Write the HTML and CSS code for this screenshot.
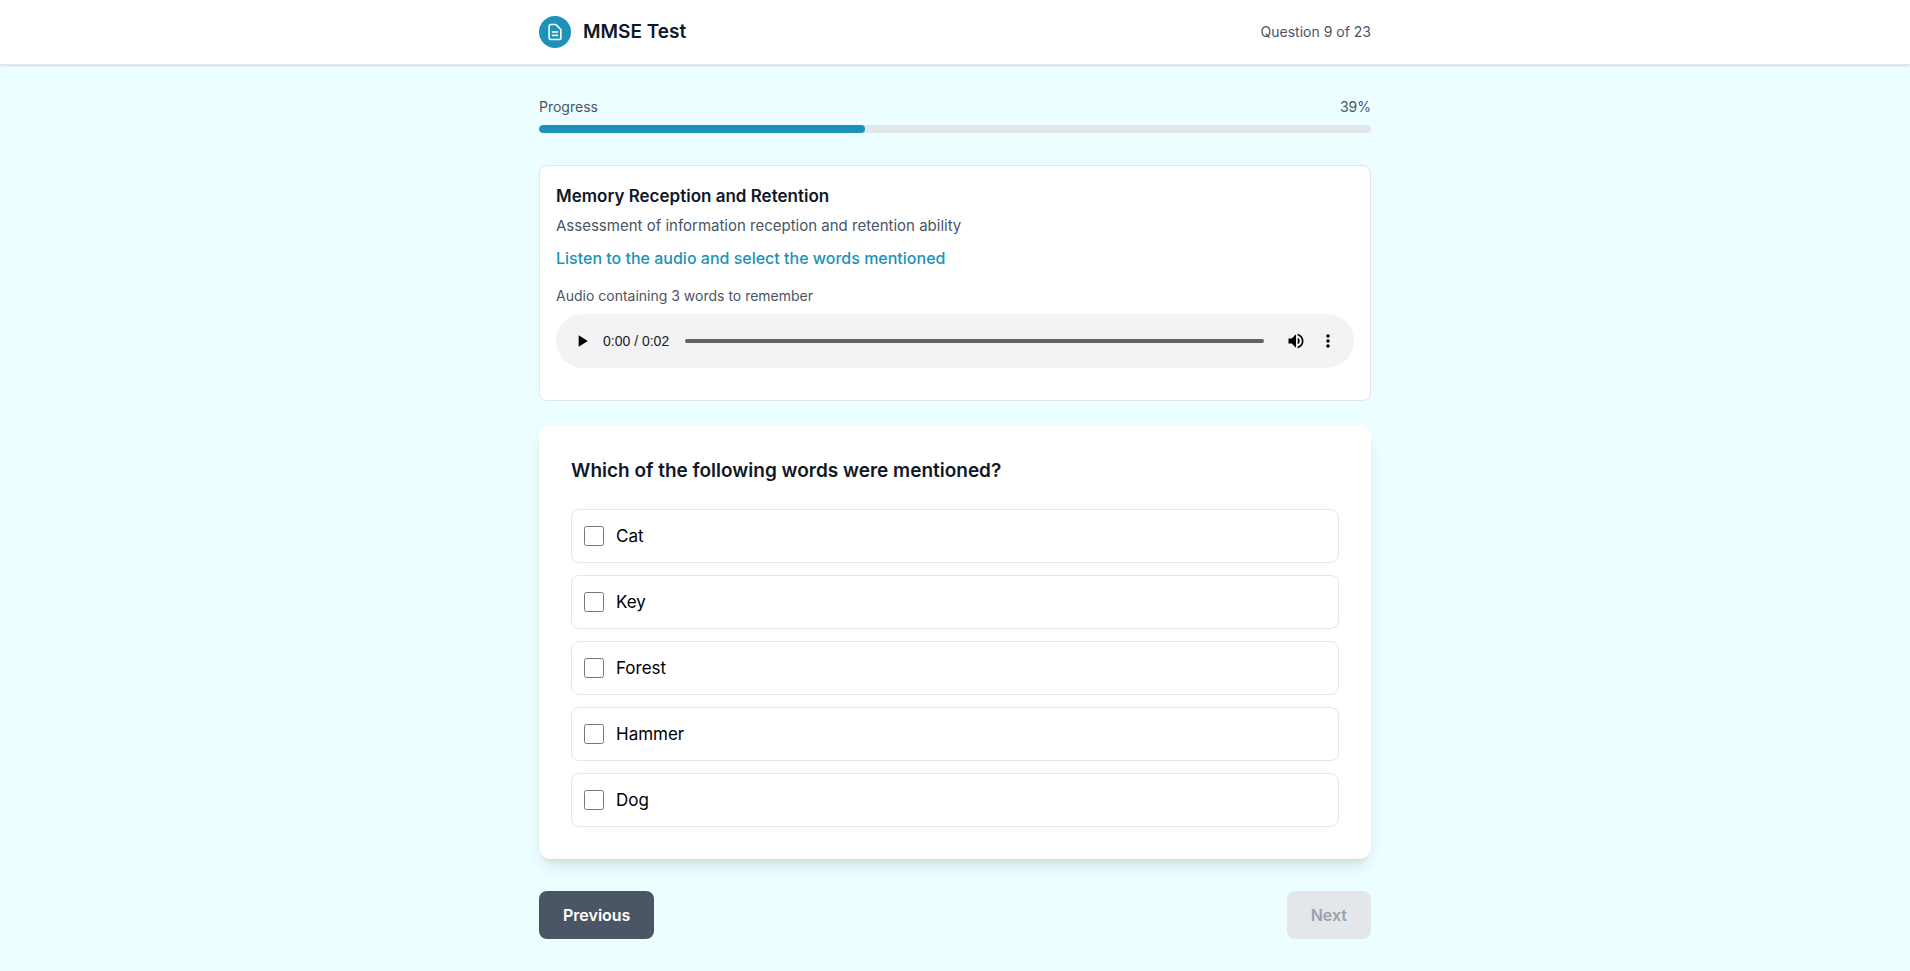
FILE: index.html
```html
<!DOCTYPE html>
<html lang="en">
<head>
<meta charset="utf-8">
<meta name="viewport" content="width=device-width, initial-scale=1">
<title>MMSE Test</title>
<link rel="stylesheet" href="styles.css">
</head>
<body>
<header class="topbar">
  <div class="container topbar-row">
    <div class="brand">
      <span class="brand-icon">
        <svg width="20" height="20" viewBox="0 0 24 24" fill="none" stroke="currentColor" stroke-width="2" stroke-linecap="round" stroke-linejoin="round" aria-hidden="true"><path d="M9 12h6m-6 4h6m2 5H7a2 2 0 01-2-2V5a2 2 0 012-2h5.586a1 1 0 01.707.293l5.414 5.414a1 1 0 01.293.707V19a2 2 0 01-2 2z"/></svg>
      </span>
      <h1 class="brand-title">MMSE Test</h1>
    </div>
    <span class="small-text">Question 9 of 23</span>
  </div>
</header>
<main class="container main">
  <section class="progress">
    <div class="progress-labels small-text"><span>Progress</span><span>39%</span></div>
    <div class="progress-track" role="progressbar" aria-label="Progress" aria-valuemin="0" aria-valuemax="100" aria-valuenow="39"><div class="progress-fill" style="width: 39.13%"></div></div>
  </section>

  <section class="info-card">
    <h2 class="info-title">Memory Reception and Retention</h2>
    <p class="info-desc">Assessment of information reception and retention ability</p>
    <p class="info-hint">Listen to the audio and select the words mentioned</p>
    <p class="small-text audio-label">Audio containing 3 words to remember</p>
    <div class="player" role="group" aria-label="Audio player">
      <button class="player-btn" type="button" aria-label="Play"><svg width="20" height="20" viewBox="0 0 24 24" fill="currentColor" aria-hidden="true"><path d="M8 5v14l11-7z"/></svg></button>
      <span class="player-time">0:00 / 0:02</span>
      <input class="player-seek" type="range" min="0" max="2" value="0" aria-label="Seek">
      <button class="player-btn" type="button" aria-label="Mute"><svg width="20" height="20" viewBox="0 0 24 24" fill="currentColor" aria-hidden="true"><path d="M3 9v6h4l5 5V4L7 9H3zm13.5 3c0-1.77-1.02-3.29-2.5-4.03v8.05c1.48-.73 2.5-2.25 2.5-4.02zM14 3.23v2.06c2.89.86 5 3.54 5 6.71s-2.11 5.85-5 6.71v2.06c4.01-.91 7-4.49 7-8.77s-2.99-7.86-7-8.77z"/></svg></button>
      <button class="player-btn" type="button" aria-label="More options"><svg width="20" height="20" viewBox="0 0 24 24" fill="currentColor" aria-hidden="true"><path d="M12 8c1.1 0 2-.9 2-2s-.9-2-2-2-2 .9-2 2 .9 2 2 2zm0 2c-1.1 0-2 .9-2 2s.9 2 2 2 2-.9 2-2-.9-2-2-2zm0 6c-1.1 0-2 .9-2 2s.9 2 2 2 2-.9 2-2-.9-2-2-2z"/></svg></button>
    </div>
  </section>

  <section class="question-card">
    <h2 class="question-title">Which of the following words were mentioned?</h2>
    <div class="options">
      <label class="option"><input class="option-box" type="checkbox" name="words" value="cat"><span>Cat</span></label>
      <label class="option"><input class="option-box" type="checkbox" name="words" value="key"><span>Key</span></label>
      <label class="option"><input class="option-box" type="checkbox" name="words" value="forest"><span>Forest</span></label>
      <label class="option"><input class="option-box" type="checkbox" name="words" value="hammer"><span>Hammer</span></label>
      <label class="option"><input class="option-box" type="checkbox" name="words" value="dog"><span>Dog</span></label>
    </div>
  </section>

  <nav class="actions" aria-label="Question navigation">
    <button class="btn btn-prev" type="button">Previous</button>
    <button class="btn btn-next" type="button" disabled>Next</button>
  </nav>
</main>
</body>
</html>
```

FILE: styles.css
```css
* { box-sizing: border-box; }
body {
  margin: 0;
  min-height: 100vh;
  background: #ecfeff;
  color: #000;
  font-family: Inter, Roboto, "Liberation Sans", sans-serif;
  font-size: 16px;
  line-height: 24px;
}
h1, h2, p { margin: 0; }
.container { max-width: 896px; margin: 0 auto; padding: 0 32px; }

.topbar {
  background: #fff;
  border-bottom: 1px solid #e5e7eb;
  box-shadow: 0 1px 3px rgba(0, 0, 0, .1), 0 1px 2px -1px rgba(0, 0, 0, .1);
}
.topbar-row { display: flex; align-items: center; justify-content: space-between; height: 64px; }
.brand { display: flex; align-items: center; gap: 12px; }
.brand-icon {
  display: flex; align-items: center; justify-content: center;
  width: 32px; height: 32px; border-radius: 50%;
  background: #1c92b8; color: #fff;
}
.brand-title { font-size: 19px; line-height: 28px; font-weight: 600; color: #101828; }
.small-text { font-size: 14px; line-height: 20px; color: #4a5565; }

.main { padding-top: 32px; padding-bottom: 32px; }
.progress { margin-bottom: 32px; }
.progress-labels { display: flex; justify-content: space-between; margin-bottom: 8px; }
.progress-track { height: 8px; border-radius: 4px; background: #e4e7ea; overflow: hidden; }
.progress-fill { height: 100%; border-radius: 4px; background: #1c92b8; }

.info-card {
  margin-bottom: 24px; padding: 16px 16px 32px;
  background: #fff; border: 1px solid #e2e6ea; border-radius: 8px;
}
.info-title { margin-bottom: 4px; font-size: 17px; line-height: 28px; font-weight: 600; color: #101828; }
.info-desc { margin-bottom: 8px; font-size: 15px; color: #4a5565; }
.info-hint { margin-bottom: 16px; font-size: 16px; font-weight: 500; color: #1c92b8; }
.audio-label { margin-bottom: 8px; }

.player {
  display: flex; align-items: center;
  height: 54px; padding: 0 10px; border-radius: 27px;
  background: #f1f3f4;
}
.player-btn {
  display: flex; align-items: center; justify-content: center;
  width: 32px; height: 32px; padding: 0;
  border: 0; background: none; color: #000;
}
.player-time { margin: 0 16px 0 5px; font-family: "Liberation Sans", sans-serif; font-size: 14px; line-height: 20px; color: #222; }
.player-seek {
  appearance: none; flex: 1; min-width: 0; height: 4px; margin: 0 16px 0 0;
  border-radius: 2px; background: #616161;
}
.player-seek::-webkit-slider-thumb { appearance: none; width: 1px; height: 4px; background: transparent; }

.question-card {
  margin-bottom: 32px; padding: 32px;
  background: #fff; border-radius: 12px;
  box-shadow: 0 10px 15px -3px rgba(0, 0, 0, .1), 0 4px 6px -4px rgba(0, 0, 0, .1);
}
.question-title { margin-bottom: 24px; font-size: 19px; line-height: 28px; font-weight: 600; color: #101828; }
.options { display: flex; flex-direction: column; gap: 12px; }
.option {
  display: flex; align-items: center; gap: 12px;
  padding: 12px; border: 1px solid #e5e7eb; border-radius: 8px;
  font-size: 17px; line-height: 28px;
}
.option-box { width: 20px; height: 20px; margin: 0; }

.actions { display: flex; justify-content: space-between; }
.btn {
  padding: 12px 24px; border: 0; border-radius: 8px;
  font-family: inherit; font-size: 16px; line-height: 24px; font-weight: 600;
}
.btn-prev { background: #4a5565; color: #fff; }
.btn-next { background: #e4e7ea; color: #99a1af; }
```
